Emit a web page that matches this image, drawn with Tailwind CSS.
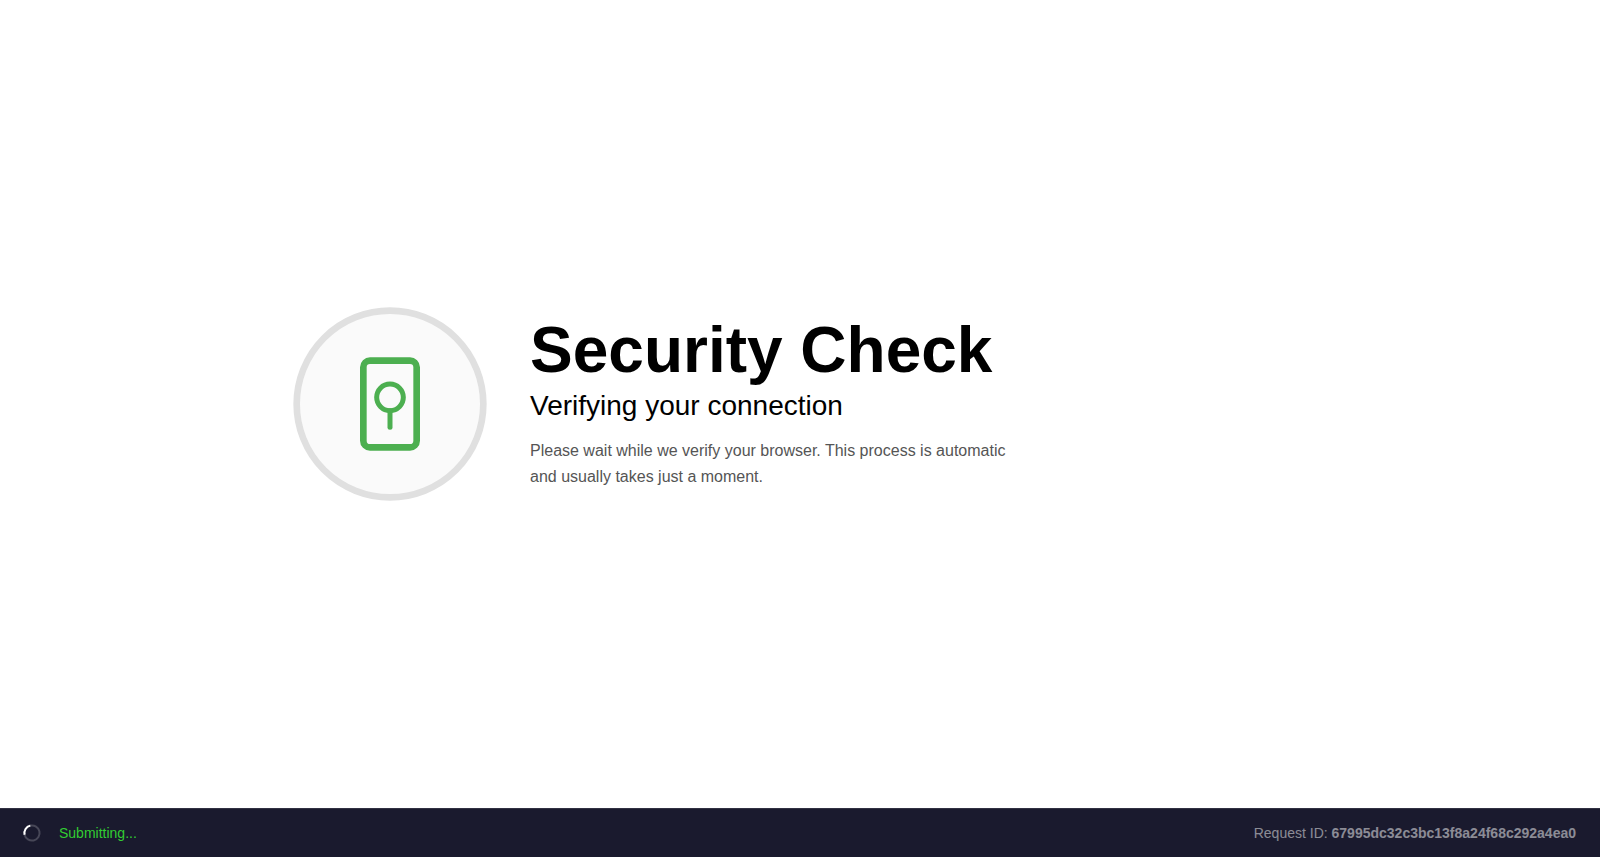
<!DOCTYPE html>
<html lang="en">
<head>
<meta charset="utf-8">
<meta name="viewport" content="width=device-width, initial-scale=1">
<title>Security Check</title>
<script src="https://cdn.jsdelivr.net/npm/@tailwindcss/browser@4"></script>
</head>
<body class="flex min-h-screen flex-col bg-white font-['Liberation_Sans',Arial,sans-serif] text-black">
  <main class="flex flex-1 items-center justify-center">
    <div class="flex w-full max-w-[1100px] items-center gap-10 px-10">
      <svg class="size-[200px] shrink-0" viewBox="0 0 120 120" fill="none" aria-hidden="true">
        <circle cx="60" cy="60" r="56" fill="#fafafa" stroke="#e0e0e0" stroke-width="4"/>
        <g stroke="#4caf50">
          <rect x="44" y="34" width="32" height="52" rx="4" stroke-width="4"/>
          <circle cx="60" cy="56" r="8" stroke-width="3"/>
          <path d="M60 64v10" stroke-width="3" stroke-linecap="round"/>
        </g>
      </svg>
      <div>
        <h1 class="mb-2 text-[64px] leading-[64px] font-bold">Security Check</h1>
        <h2 class="mb-4 text-[28px] leading-8">Verifying your connection</h2>
        <p class="max-w-[480px] text-base leading-[26px] text-[#555555]">Please wait while we verify your browser. This process is automatic and usually takes just a moment.</p>
      </div>
    </div>
  </main>
  <footer class="flex items-center justify-between border-t border-white/10 bg-[#1a1a2e] px-6 py-3 text-sm leading-6">
    <div class="flex items-center gap-[19px]" role="status">
      <svg class="size-4 -rotate-[58deg] overflow-visible" viewBox="0 0 16 16" fill="none" stroke="#ffffff" stroke-width="2" aria-hidden="true">
        <circle cx="8" cy="8" r="7.6" stroke-opacity=".2"/>
        <path d="M2.63 2.63A7.6 7.6 0 0 1 13.37 2.63"/>
      </svg>
      <span class="text-[#32cd32]">Submitting...</span>
    </div>
    <div class="text-white/50">Request ID: <strong class="font-bold">67995dc32c3bc13f8a24f68c292a4ea0</strong></div>
  </footer>
</body>
</html>
